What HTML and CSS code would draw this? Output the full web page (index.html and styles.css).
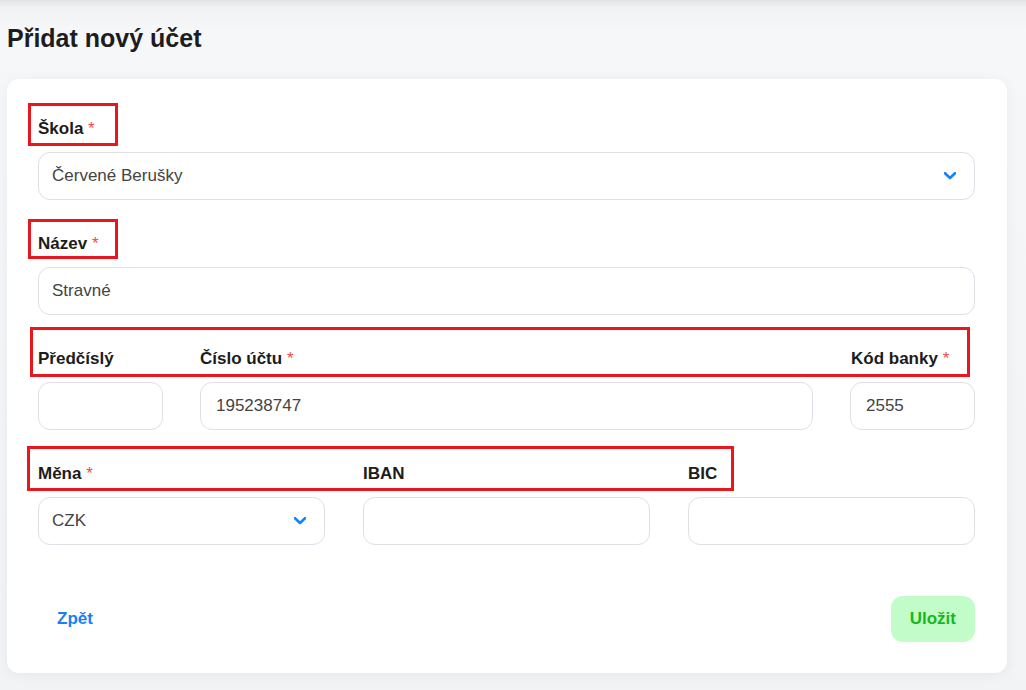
FILE: index.html
```html
<!DOCTYPE html>
<html lang="cs">
<head>
    <meta charset="UTF-8">
    <meta name="viewport" content="width=device-width, initial-scale=1.0">
    <title>Přidat nový účet</title>
    <link rel="stylesheet" href="styles.css">
</head>
<body>
    <h1 class="page-title">Přidat nový účet</h1>

    <!-- Account form -->
    <form class="account-card">
        <div class="field">
            <div class="label-row">
                <span class="mark mark-school"></span>
                <label>Škola <span class="req">*</span></label>
            </div>
            <div class="select">
                <span>Červené Berušky</span>
                <svg class="chevron" viewBox="0 0 12 8"><path d="M1 1.2 L6 6 L11 1.2" fill="none" stroke="currentColor" stroke-width="2.6" stroke-linecap="round" stroke-linejoin="round"/></svg>
            </div>
        </div>

        <div class="field">
            <div class="label-row">
                <span class="mark mark-name"></span>
                <label>Název <span class="req">*</span></label>
            </div>
            <div class="input">Stravné</div>
        </div>

        <!-- Bank account number -->
        <div class="field-row row-account">
            <span class="mark mark-account"></span>
            <div class="field">
                <div class="label-row"><label>Předčíslý</label></div>
                <div class="input"></div>
            </div>
            <div class="field">
                <div class="label-row"><label>Číslo účtu <span class="req">*</span></label></div>
                <div class="input num">195238747</div>
            </div>
            <div class="field">
                <div class="label-row"><label>Kód banky <span class="req">*</span></label></div>
                <div class="input num">2555</div>
            </div>
        </div>

        <!-- Currency and international codes -->
        <div class="field-row row-currency">
            <span class="mark mark-currency"></span>
            <div class="field">
                <div class="label-row"><label>Měna <span class="req">*</span></label></div>
                <div class="select">
                    <span>CZK</span>
                    <svg class="chevron" viewBox="0 0 12 8"><path d="M1 1.2 L6 6 L11 1.2" fill="none" stroke="currentColor" stroke-width="2.6" stroke-linecap="round" stroke-linejoin="round"/></svg>
                </div>
            </div>
            <div class="field">
                <div class="label-row"><label>IBAN</label></div>
                <div class="input"></div>
            </div>
            <div class="field">
                <div class="label-row"><label>BIC</label></div>
                <div class="input"></div>
            </div>
        </div>

        <div class="actions">
            <a class="btn btn-back" href="#">Zpět</a>
            <button type="button" class="btn btn-save">Uložit</button>
        </div>
    </form>
</body>
</html>
```

FILE: styles.css
```css
/* General body styling */
body {
    font-family: "Liberation Sans", Arial, sans-serif;
    margin: 0;
    padding: 0 19px 17px 7px;
    min-height: 690px;
    box-sizing: border-box;
    background: linear-gradient(to bottom, #e2e3e6 0px, #f1f2f4 8px, #f6f7f9 30px, #f2f3f5 100%);
    color: #1c1c1c;
}

.page-title {
    margin: 0;
    padding: 24px 0 0;
    height: 55px;
    font-size: 25px;
    font-weight: bold;
    color: #1d1d1f;
}

/* Card */
.account-card {
    background-color: #fff;
    border-radius: 12px;
    box-shadow: 0 2px 14px rgba(0, 0, 0, 0.05);
    padding: 39px 32px 31px 31px;
}

.field {
    margin-bottom: 33px;
}

.label-row {
    position: relative;
    height: 20px;
    line-height: 20px;
    padding-top: 1px;
    margin-bottom: 13px;
}

label {
    font-size: 17px;
    font-weight: bold;
    color: #1c1c1c;
}

.req {
    color: #f04b4b;
    font-weight: normal;
}

/* Inputs */
.input,
.select {
    height: 48px;
    box-sizing: border-box;
    border: 1px solid #dfdfe8;
    border-radius: 12px;
    padding: 0 13px;
    font-size: 17px;
    color: #444;
    display: flex;
    align-items: center;
}

.input.num {
    padding-left: 15px;
}

.select {
    justify-content: space-between;
    padding-right: 18px;
}

.chevron {
    width: 12px;
    height: 8px;
    color: #0f86ff;
}

/* Multi column rows */
.field-row {
    position: relative;
    display: flex;
    gap: 37px;
}

.row-account .field:nth-child(2),
.row-account .field:nth-child(4) {
    width: 125px;
}

.row-account .field:nth-child(3) {
    flex: 1;
}

.row-account .field:nth-child(4) .label-row {
    padding-left: 1px;
}

.row-currency {
    gap: 38px;
}

.row-currency .field {
    flex: 1;
}

/* Red highlight frames */
.mark {
    position: absolute;
    border: 3px solid #e8161d;
    box-sizing: border-box;
    pointer-events: none;
}

.mark-school {
    left: -10px;
    top: -15px;
    width: 90px;
    height: 43px;
}

.mark-name {
    left: -10px;
    top: -14px;
    width: 90px;
    height: 40px;
}

.mark-account {
    left: -8px;
    top: -21px;
    width: 940px;
    height: 50px;
}

.mark-currency {
    left: -11px;
    top: -17px;
    width: 707px;
    height: 45px;
}

/* Buttons */
.actions {
    display: flex;
    justify-content: space-between;
    align-items: center;
    padding-top: 18px;
}

.btn {
    font-family: inherit;
    font-size: 17px;
    font-weight: bold;
    border: none;
    border-radius: 12px;
    height: 46px;
    padding: 0 19px;
    display: inline-flex;
    align-items: center;
    text-decoration: none;
}

.btn-back {
    color: #1680f7;
    background: none;
}

.btn-save {
    background-color: #c2fdc9;
    color: #14b823;
}
```
